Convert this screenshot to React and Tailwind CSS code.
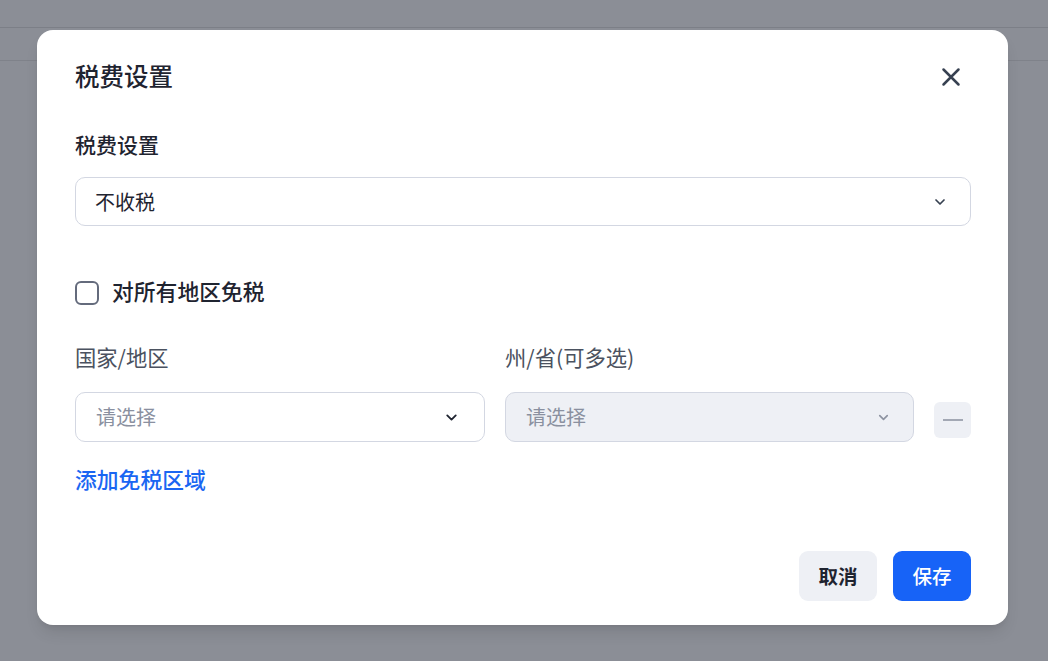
import React from 'react';

const Chevron = ({ className }) => (
  <svg viewBox="0 0 24 24" fill="none" stroke="currentColor" strokeWidth="2.6" strokeLinecap="round" strokeLinejoin="round" className={className}>
    <path d="M6 9l6 6 6-6" />
  </svg>
);

const App = () => {
  return (
    <div
      className="relative w-[1048px] h-[661px] overflow-hidden bg-[#8b8e96]"
      style={{ fontFamily: '"Noto Sans CJK SC", "Noto Sans", sans-serif' }}
    >
      {/* page behind the overlay */}
      <div className="h-[28px] border-b border-[#7c7f87]" />
      <div className="h-[33px] border-b border-[#7f828a]" />

      {/* Dialog */}
      <div className="absolute left-[37px] top-[30px] w-[971px] h-[595px] bg-white rounded-[16px] pl-[38px] pr-[37px] pt-[30px] pb-[24px] flex flex-col shadow-lg">
        <div className="flex items-center h-[32px]">
          <h2 className="text-[24.5px] leading-[32px] font-medium text-[#1f2430]">税费设置</h2>
          <button className="ml-auto mr-[4px] mt-[2px] w-[32px] h-[32px] flex items-center justify-center text-[#374151]">
            <svg viewBox="0 0 24 24" className="w-[30px] h-[30px]" fill="none" stroke="currentColor" strokeWidth="2" strokeLinecap="round">
              <path d="M6 6l12 12M18 6L6 18" />
            </svg>
          </button>
        </div>

        <label className="mt-[38px] text-[21px] leading-[28px] font-medium text-[#1f2430]">税费设置</label>
        <div className="mt-[19px] h-[49px] rounded-[10px] border border-[#d3d7e2] flex items-center pl-[19px] pr-[22px]">
          <span className="text-[20px] text-[#1f2430]">不收税</span>
          <Chevron className="ml-auto w-[16px] h-[16px] text-[#374151]" />
        </div>

        <div className="mt-[55px] flex items-center h-[24px] gap-[13px]">
          <span className="w-[24px] h-[24px] rounded-[6px] border-2 border-[#646b7c] bg-white" />
          <span className="pb-[4px] text-[21.8px] leading-[28px] font-medium text-[#1f2430]">对所有地区免税</span>
        </div>

        <div className="mt-[38px] grid grid-cols-[410px_409px_37px] gap-x-[20px]">
          <span className="text-[21.3px] leading-[28px] text-[#4b5260]">国家/地区</span>
          <span className="text-[21.3px] leading-[28px] text-[#4b5260]">州/省(可多选)</span>
          <span />

          <div className="mt-[21px] h-[50px] rounded-[10px] border border-[#d3d7e2] bg-white flex items-center pl-[20px] pr-[24px]">
            <span className="text-[20px] text-[#8a90a0]">请选择</span>
            <Chevron className="ml-auto w-[17px] h-[17px] text-[#1f2430]" />
          </div>
          <div className="mt-[21px] h-[50px] rounded-[10px] border border-[#d3d7e2] bg-[#eef0f5] flex items-center pl-[20px] pr-[22px]">
            <span className="text-[20px] text-[#8a90a0]">请选择</span>
            <Chevron className="ml-auto w-[15px] h-[15px] text-[#8d93a1]" />
          </div>
          <div className="mt-[31px] h-[36px] rounded-[6px] bg-[#eef0f5] flex items-center justify-center self-start">
            <span className="w-[20px] h-[2px] bg-[#a3a8b4]" />
          </div>
        </div>

        <a href="#" className="mt-[23px] self-start text-[21.8px] leading-[28px] font-medium text-[#1a66f2]">添加免税区域</a>

        <div className="mt-auto flex justify-end gap-[16px]">
          <button className="w-[78px] h-[50px] rounded-[9px] bg-[#eef0f5] text-[19.5px] font-semibold text-[#1f2430]">取消</button>
          <button className="w-[78px] h-[50px] rounded-[9px] bg-[#1763f7] text-[19.5px] font-medium text-white">保存</button>
        </div>
      </div>
    </div>
  );
};

export default App;
